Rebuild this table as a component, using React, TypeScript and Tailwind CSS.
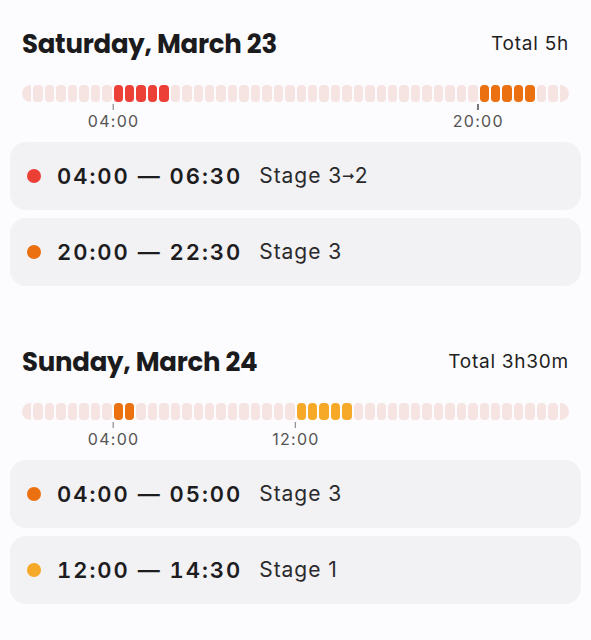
import React from "react";

type Session = { start: number; end: number; color: string; time: string; stage: React.ReactNode };
type Day = { title: string; total: string; ticks: { hour: number; label: string }[]; sessions: Session[] };

const RED = "#ec3f36";
const ORANGE = "#ea7010";
const AMBER = "#f6a928";

const days: Day[] = [
  {
    title: "Saturday, March 23",
    total: "Total 5h",
    ticks: [
      { hour: 4, label: "04:00" },
      { hour: 20, label: "20:00" },
    ],
    sessions: [
      {
        start: 4,
        end: 6.5,
        color: RED,
        time: "04:00 — 06:30",
        stage: (
          <>
            Stage 3<span className="text-[15px] font-bold align-[2px] tracking-normal" style={{ fontFamily: "'DejaVu Sans', sans-serif" }}>➞</span>2
          </>
        ),
      },
      { start: 20, end: 22.5, color: ORANGE, time: "20:00 — 22:30", stage: "Stage 3" },
    ],
  },
  {
    title: "Sunday, March 24",
    total: "Total 3h30m",
    ticks: [
      { hour: 4, label: "04:00" },
      { hour: 12, label: "12:00" },
    ],
    sessions: [
      { start: 4, end: 5, color: ORANGE, time: "04:00 — 05:00", stage: "Stage 3" },
      { start: 12, end: 14.5, color: AMBER, time: "12:00 — 14:30", stage: "Stage 1" },
    ],
  },
];

function Timeline({ day }: { day: Day }) {
  const slots = Array.from({ length: 48 }, (_, i) => {
    const h = i / 2;
    const s = day.sessions.find((x) => h >= x.start && h < x.end);
    return s ? s.color : null;
  });
  return (
    <div className="px-[12px]">
      <div className="flex gap-[2px] h-[17px]">
        {slots.map((c, i) => (
          <div
            key={i}
            className={`flex-1 ${i === 0 ? "rounded-l-full rounded-r-[4px]" : i === 47 ? "rounded-r-full rounded-l-[4px]" : "rounded-[4px]"}`}
            style={{ backgroundColor: c ?? "#f5e4e1" }}
          />
        ))}
      </div>
      <div className="relative h-[29px]">
        {day.ticks.map((t) => (
          <div
            key={t.label}
            className="absolute top-0 flex flex-col items-center -translate-x-1/2"
            style={{ left: `${(t.hour / 24) * 100}%` }}
          >
            <div className="w-[1.5px] h-[6px] bg-[#777] mt-[2px]" />
            <span className="mt-[1px] text-[16px] leading-[20px] tracking-[0.08em] text-[#555] pl-[1px]">{t.label}</span>
          </div>
        ))}
      </div>
    </div>
  );
}

function DaySection({ day }: { day: Day }) {
  return (
    <section className="flex flex-col">
      <div className="flex items-center justify-between px-[12px] h-[28px]">
        <h2 className="text-[26px] font-bold tracking-[-0.01em] text-[#1b1b1d]" style={{ fontFamily: "Poppins, 'Open Sans', sans-serif" }}>
          {day.title}
        </h2>
        <span className="text-[19px] tracking-[0.04em] text-[#1f1f22]">{day.total}</span>
      </div>
      <div className="mt-[27px]">
        <Timeline day={day} />
      </div>
      <div className="flex flex-col gap-[8px] mt-[11px]">
        {day.sessions.map((s) => (
          <div key={s.time} className="flex items-center h-[68px] rounded-[16px] bg-[#f2f1f3] pl-[17px]">
            <span className="w-[14px] h-[14px] rounded-full shrink-0" style={{ backgroundColor: s.color }} />
            <span className="ml-[16px] text-[22px] font-semibold tracking-[0.09em] text-[#1d1d1f] tabular-nums">{s.time}</span>
            <span className="ml-[17px] text-[21px] text-[#2a2a2c] tracking-[0.045em]">{s.stage}</span>
          </div>
        ))}
      </div>
    </section>
  );
}

export default function App() {
  return (
    <div className="min-h-screen bg-[#fcfbfd] px-[10px] pt-[30px] pb-[36px] flex flex-col gap-[62px]" style={{ fontFamily: "Inter, 'Noto Sans', sans-serif" }}>
      {days.map((d) => (
        <DaySection key={d.title} day={d} />
      ))}
    </div>
  );
}
